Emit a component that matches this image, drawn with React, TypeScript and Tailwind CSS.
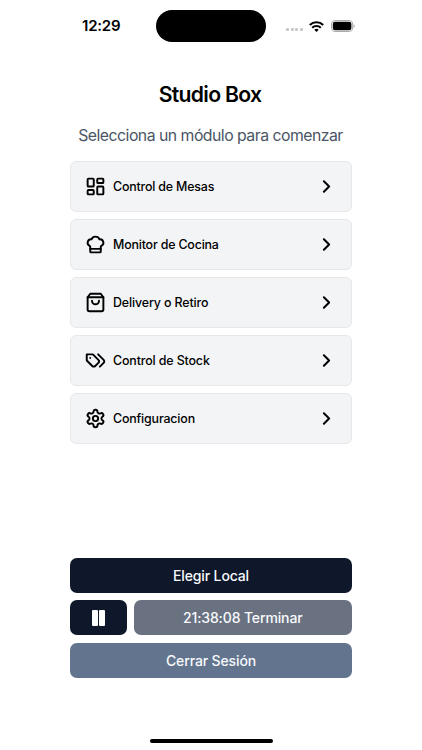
import { ChefHat, ChevronRight, LayoutDashboard } from 'lucide-react';

const iconProps = {
  viewBox: '0 0 24 24',
  fill: 'none',
  stroke: 'currentColor',
  strokeWidth: 2.2,
  strokeLinecap: 'round',
  strokeLinejoin: 'round',
} as const;

function BagIcon({ className }: { className?: string }) {
  return (
    <svg {...iconProps} className={className}>
      <path d="M6 2 3 6v14a2 2 0 0 0 2 2h14a2 2 0 0 0 2-2V6l-3-4Z" />
      <path d="M3 6h18" />
      <path d="M16 10a4 4 0 0 1-8 0" />
    </svg>
  );
}

function TagsIcon({ className }: { className?: string }) {
  return (
    <svg {...iconProps} className={className}>
      <path d="M9 5H2v7l6.29 6.29c.94.94 2.48.94 3.42 0l3.58-3.58c.94-.94.94-2.48 0-3.42L9 5Z" />
      <path d="M6 9.01V9" />
      <path d="m15 5 6.3 6.3a2.4 2.4 0 0 1 0 3.4L17 19" />
    </svg>
  );
}

function SettingsIcon({ className }: { className?: string }) {
  return (
    <svg {...iconProps} className={className}>
      <path d="M12.22 2h-.44a2 2 0 0 0-2 2v.18a2 2 0 0 1-1 1.73l-.43.25a2 2 0 0 1-2 0l-.15-.08a2 2 0 0 0-2.73.73l-.22.38a2 2 0 0 0 .73 2.73l.15.1a2 2 0 0 1 1 1.72v.51a2 2 0 0 1-1 1.74l-.15.09a2 2 0 0 0-.73 2.73l.22.38a2 2 0 0 0 2.73.73l.15-.08a2 2 0 0 1 2 0l.43.25a2 2 0 0 1 1 1.73V20a2 2 0 0 0 2 2h.44a2 2 0 0 0 2-2v-.18a2 2 0 0 1 1-1.73l.43-.25a2 2 0 0 1 2 0l.15.08a2 2 0 0 0 2.73-.73l.22-.39a2 2 0 0 0-.73-2.73l-.15-.08a2 2 0 0 1-1-1.74v-.5a2 2 0 0 1 1-1.74l.15-.09a2 2 0 0 0 .73-2.73l-.22-.38a2 2 0 0 0-2.73-.73l-.15.08a2 2 0 0 1-2 0l-.43-.25a2 2 0 0 1-1-1.73V4a2 2 0 0 0-2-2z" />
      <circle cx="12" cy="12" r="3" />
    </svg>
  );
}

const modules = [
  { name: 'Control de Mesas', icon: LayoutDashboard, text: 'tracking-[-0.17px]' },
  { name: 'Monitor de Cocina', icon: ChefHat, text: 'tracking-[-0.17px]' },
  { name: 'Delivery o Retiro', icon: BagIcon, text: 'tracking-[-0.12px]' },
  { name: 'Control de Stock', icon: TagsIcon, text: 'tracking-[-0.12px]' },
  { name: 'Configuracion', icon: SettingsIcon, text: 'tracking-[-0.16px]' },
];

function StatusBar() {
  return (
    <div className="flex h-[42px] items-end pl-[82px]">
      <span className="w-[74px] pb-1 text-[15px] font-semibold leading-6 tracking-[-0.2px]">
        12:29
      </span>
      <div className="h-8 w-[110px] rounded-full bg-black" />
      <div className="ml-5 flex h-8 items-center">
        <div className="mt-[7px] flex gap-[1.7px]">
          <span className="size-[3px] rounded-[1px] bg-[#c8c8c8]" />
          <span className="size-[3px] rounded-[1px] bg-[#c8c8c8]" />
          <span className="size-[3px] rounded-[1px] bg-[#c8c8c8]" />
          <span className="size-[3px] rounded-[1px] bg-[#c8c8c8]" />
        </div>
        <svg
          className="ml-[6px] h-[11px] w-[15px]"
          viewBox="0 0 15 11"
          fill="none"
          stroke="black"
          strokeWidth="2.1"
        >
          <path d="M.8 3.9a9.6 9.6 0 0 1 13.4 0" />
          <path d="M3.2 6.7a6.2 6.2 0 0 1 8.6 0" />
          <path d="M7.5 11 5.3 8.7a3.2 3.2 0 0 1 4.4 0Z" fill="black" stroke="none" />
        </svg>
        <svg className="ml-[7px] h-3 w-6" viewBox="0 0 24 12" fill="none">
          <rect x=".5" y=".5" width="21.2" height="11" rx="3.5" stroke="#aaa" />
          <rect x="1.8" y="1.8" width="18.6" height="8.4" rx="2.3" fill="black" />
          <path d="M22.6 4.2c1.4.5 1.4 3.1 0 3.6Z" fill="#999" />
        </svg>
      </div>
    </div>
  );
}

export default function App() {
  return (
    <div className="flex h-[750px] w-[422px] flex-col bg-white font-['Inter',sans-serif] text-black">
      <StatusBar />
      <main className="mx-auto flex w-[282px] flex-1 flex-col">
        <h1 className="mt-9 pr-[2px] text-center text-[21.2px] font-semibold leading-8 tracking-[-0.7px]">
          Studio Box
        </h1>
        <p className="mt-[14px] whitespace-nowrap pr-px text-center text-[15.8px] leading-6 tracking-[-0.51px] text-gray-600">
          Selecciona un módulo para comenzar
        </p>
        <div className="mt-[13px] flex flex-col gap-[7px]">
          {modules.map(({ name, icon: Icon, text }) => (
            <button
              key={name}
              type="button"
              className="flex h-[51px] items-center rounded-md border border-gray-200 bg-gray-100 pl-[14px] pr-[14px]"
            >
              <Icon className="size-[21px]" strokeWidth={2.2} />
              <span className={`ml-[7px] mt-px text-[12.4px] font-medium ${text}`}>
                {name}
              </span>
              <ChevronRight className="ml-auto size-[21px]" strokeWidth={2.3} />
            </button>
          ))}
        </div>
        <div className="mt-auto mb-[72.5px] flex flex-col gap-[7.2px] text-[14px] font-medium tracking-[-0.13px] text-slate-50">
          <button type="button" className="h-[35px] rounded-[7px] bg-slate-900">
            Elegir Local
          </button>
          <div className="flex gap-[7px]">
            <button
              type="button"
              aria-label="Pausar"
              className="flex h-[35px] w-[56.5px] items-center justify-center gap-px rounded-[7px] bg-slate-900"
            >
              <span className="h-4 w-[6px] rounded-[1px] bg-white" />
              <span className="h-4 w-[6px] rounded-[1px] bg-white" />
            </button>
            <button type="button" className="h-[35px] flex-1 rounded-[7px] bg-gray-500">
              21:38:08 Terminar
            </button>
          </div>
          <button type="button" className="h-[35px] rounded-[7px] bg-slate-500">
            Cerrar Sesión
          </button>
        </div>
      </main>
      {/* home indicator */}
      <div className="mx-auto -mt-[11px] mb-[7px] h-1 w-[123px] rounded-full bg-black" />
    </div>
  );
}
